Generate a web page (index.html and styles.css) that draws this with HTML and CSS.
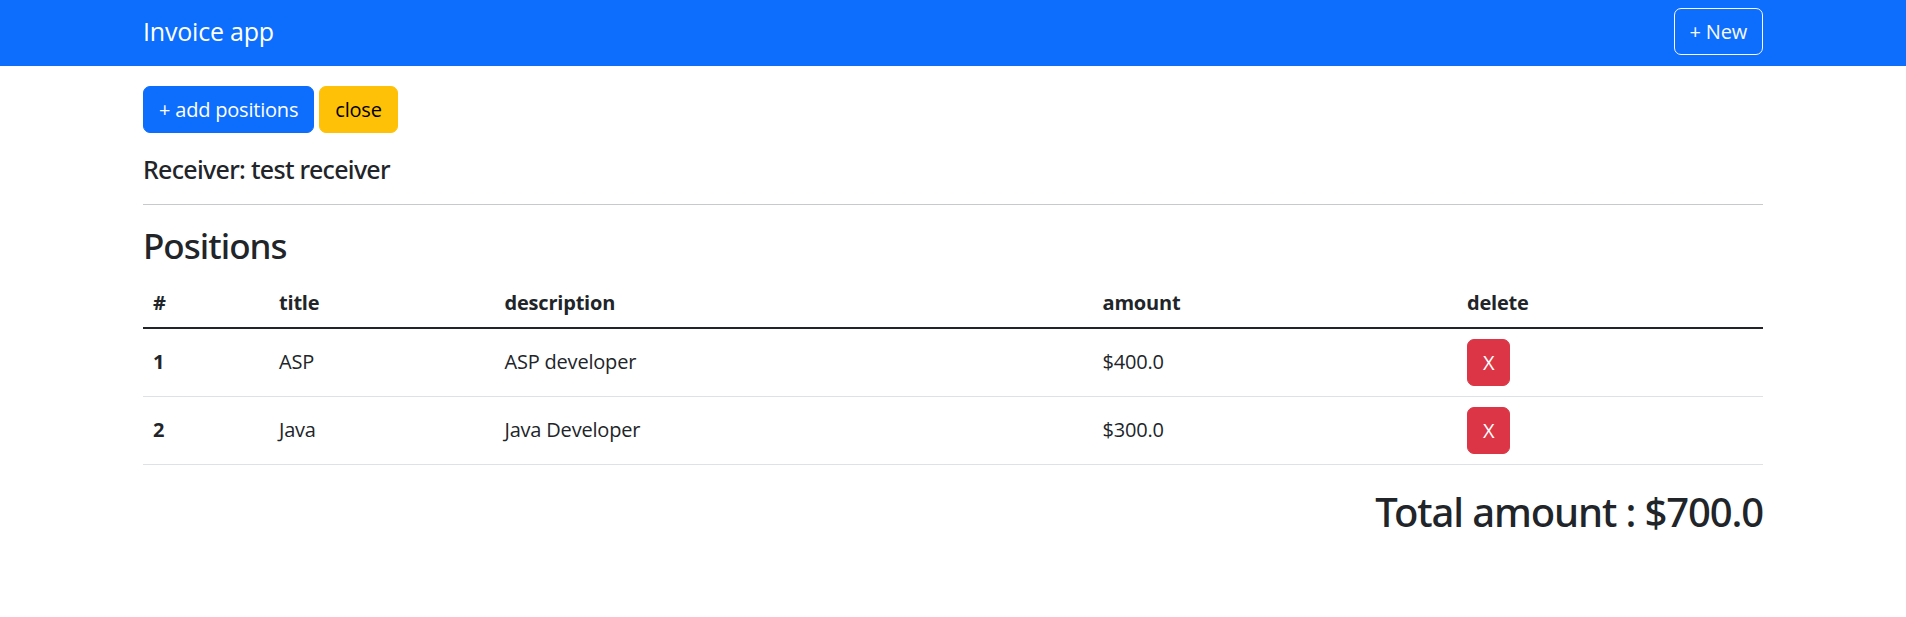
FILE: index.html
```html
<!DOCTYPE html>
<html lang="en">
<head>
<meta charset="utf-8">
<title>Invoice app</title>
<link rel="stylesheet" href="styles.css">
</head>
<body>
<nav class="navbar">
  <div class="container nav-inner">
    <span class="brand">Invoice app</span>
    <button class="btn btn-outline-light nav-btn">+ New</button>
  </div>
</nav>
<main class="container">
  <div class="actions">
    <button class="btn btn-primary">+ add positions</button>
    <button class="btn btn-warning">close</button>
  </div>
  <h5 class="receiver">Receiver: test receiver</h5>
  <hr class="divider">
  <h3 class="section-title">Positions</h3>
  <table class="table">
    <colgroup>
      <col class="c-num">
      <col class="c-title">
      <col class="c-desc">
      <col class="c-amount">
      <col class="c-del">
    </colgroup>
    <thead>
      <tr>
        <th>#</th>
        <th>title</th>
        <th>description</th>
        <th>amount</th>
        <th>delete</th>
      </tr>
    </thead>
    <tbody>
      <tr>
        <th>1</th>
        <td>ASP</td>
        <td>ASP developer</td>
        <td>$400.0</td>
        <td><button class="btn btn-danger">X</button></td>
      </tr>
      <tr>
        <th>2</th>
        <td>Java</td>
        <td>Java Developer</td>
        <td>$300.0</td>
        <td><button class="btn btn-danger">X</button></td>
      </tr>
    </tbody>
  </table>
  <h2 class="total">Total amount : $700.0</h2>
</main>
</body>
</html>
```
FILE: styles.css
```css
* { box-sizing: border-box; }

html, body {
  margin: 0;
  padding: 0;
  background: #fff;
}

body {
  font-family: "Open Sans", "Noto Sans", "Liberation Sans", sans-serif;
  font-size: 20px;
  line-height: 30px;
  color: #212529;
  letter-spacing: -0.01em;
}

.container {
  max-width: 1650px;
  margin: 0 auto;
  padding: 0 15px;
}

/* navbar */
.navbar {
  background: #0d6efd;
  height: 65.6px;
  padding-top: 6px;
}

.nav-inner {
  display: flex;
  justify-content: space-between;
  align-items: flex-start;
}

.brand {
  color: #fff;
  font-size: 25px;
  line-height: 37.5px;
  padding: 7px 0 5.5px;
}

.nav-btn {
  margin-top: 1.5px;
}

/* buttons */
.btn {
  display: inline-block;
  font-family: inherit;
  font-size: 20px;
  line-height: 30px;
  letter-spacing: -0.01em;
  padding: 8px 15px 7px;
  border: 1px solid transparent;
  border-radius: 7px;
  cursor: pointer;
  vertical-align: middle;
}

.btn-primary {
  background: #0d6efd;
  border-color: #0d6efd;
  color: #fff;
}

.btn-warning {
  background: #ffc107;
  border-color: #ffc107;
  color: #000;
}

.btn-danger {
  background: #dc3545;
  border-color: #dc3545;
  color: #fff;
}

.btn-outline-light {
  background: transparent;
  border-color: #f8f9fa;
  color: #f8f9fa;
}

.actions {
  display: flex;
  gap: 5px;
  margin-top: 20px;
  margin-bottom: 20px;
}

/* headings */
.receiver,
.section-title,
.total {
  font-family: "Noto Sans", "Open Sans", sans-serif;
  font-weight: 500;
  letter-spacing: -0.028em;
}

.receiver {
  margin: 0;
  padding-top: 1.5px;
  font-size: 25px;
  line-height: 30px;
}

.divider {
  margin: 19.9px 0 20px;
  border: 0;
  border-top: 1px solid #c8c9ca;
  height: 0;
}

.section-title {
  margin: 0 0 10px;
  font-size: 35px;
  line-height: 42px;
}

/* table */
.table {
  width: 100%;
  table-layout: fixed;
  border-collapse: collapse;
  margin-bottom: 20px;
}

.c-num { width: 126px; }
.c-title { width: 225.5px; }
.c-desc { width: 598px; }
.c-amount { width: 364.5px; }
.c-del { width: 306px; }

.table th,
.table td {
  padding: 11px 10px 9px;
  text-align: left;
  vertical-align: middle;
}

.table thead th {
  font-weight: 700;
  border-bottom: 2px solid #212529;
}

.table tbody th {
  font-weight: 700;
}

.table tbody th,
.table tbody td {
  border-bottom: 1px solid #dee2e6;
  padding: 10px;
}

.total {
  margin: 0;
  padding-top: 3px;
  text-align: right;
  font-size: 40px;
  line-height: 48px;
}
```
